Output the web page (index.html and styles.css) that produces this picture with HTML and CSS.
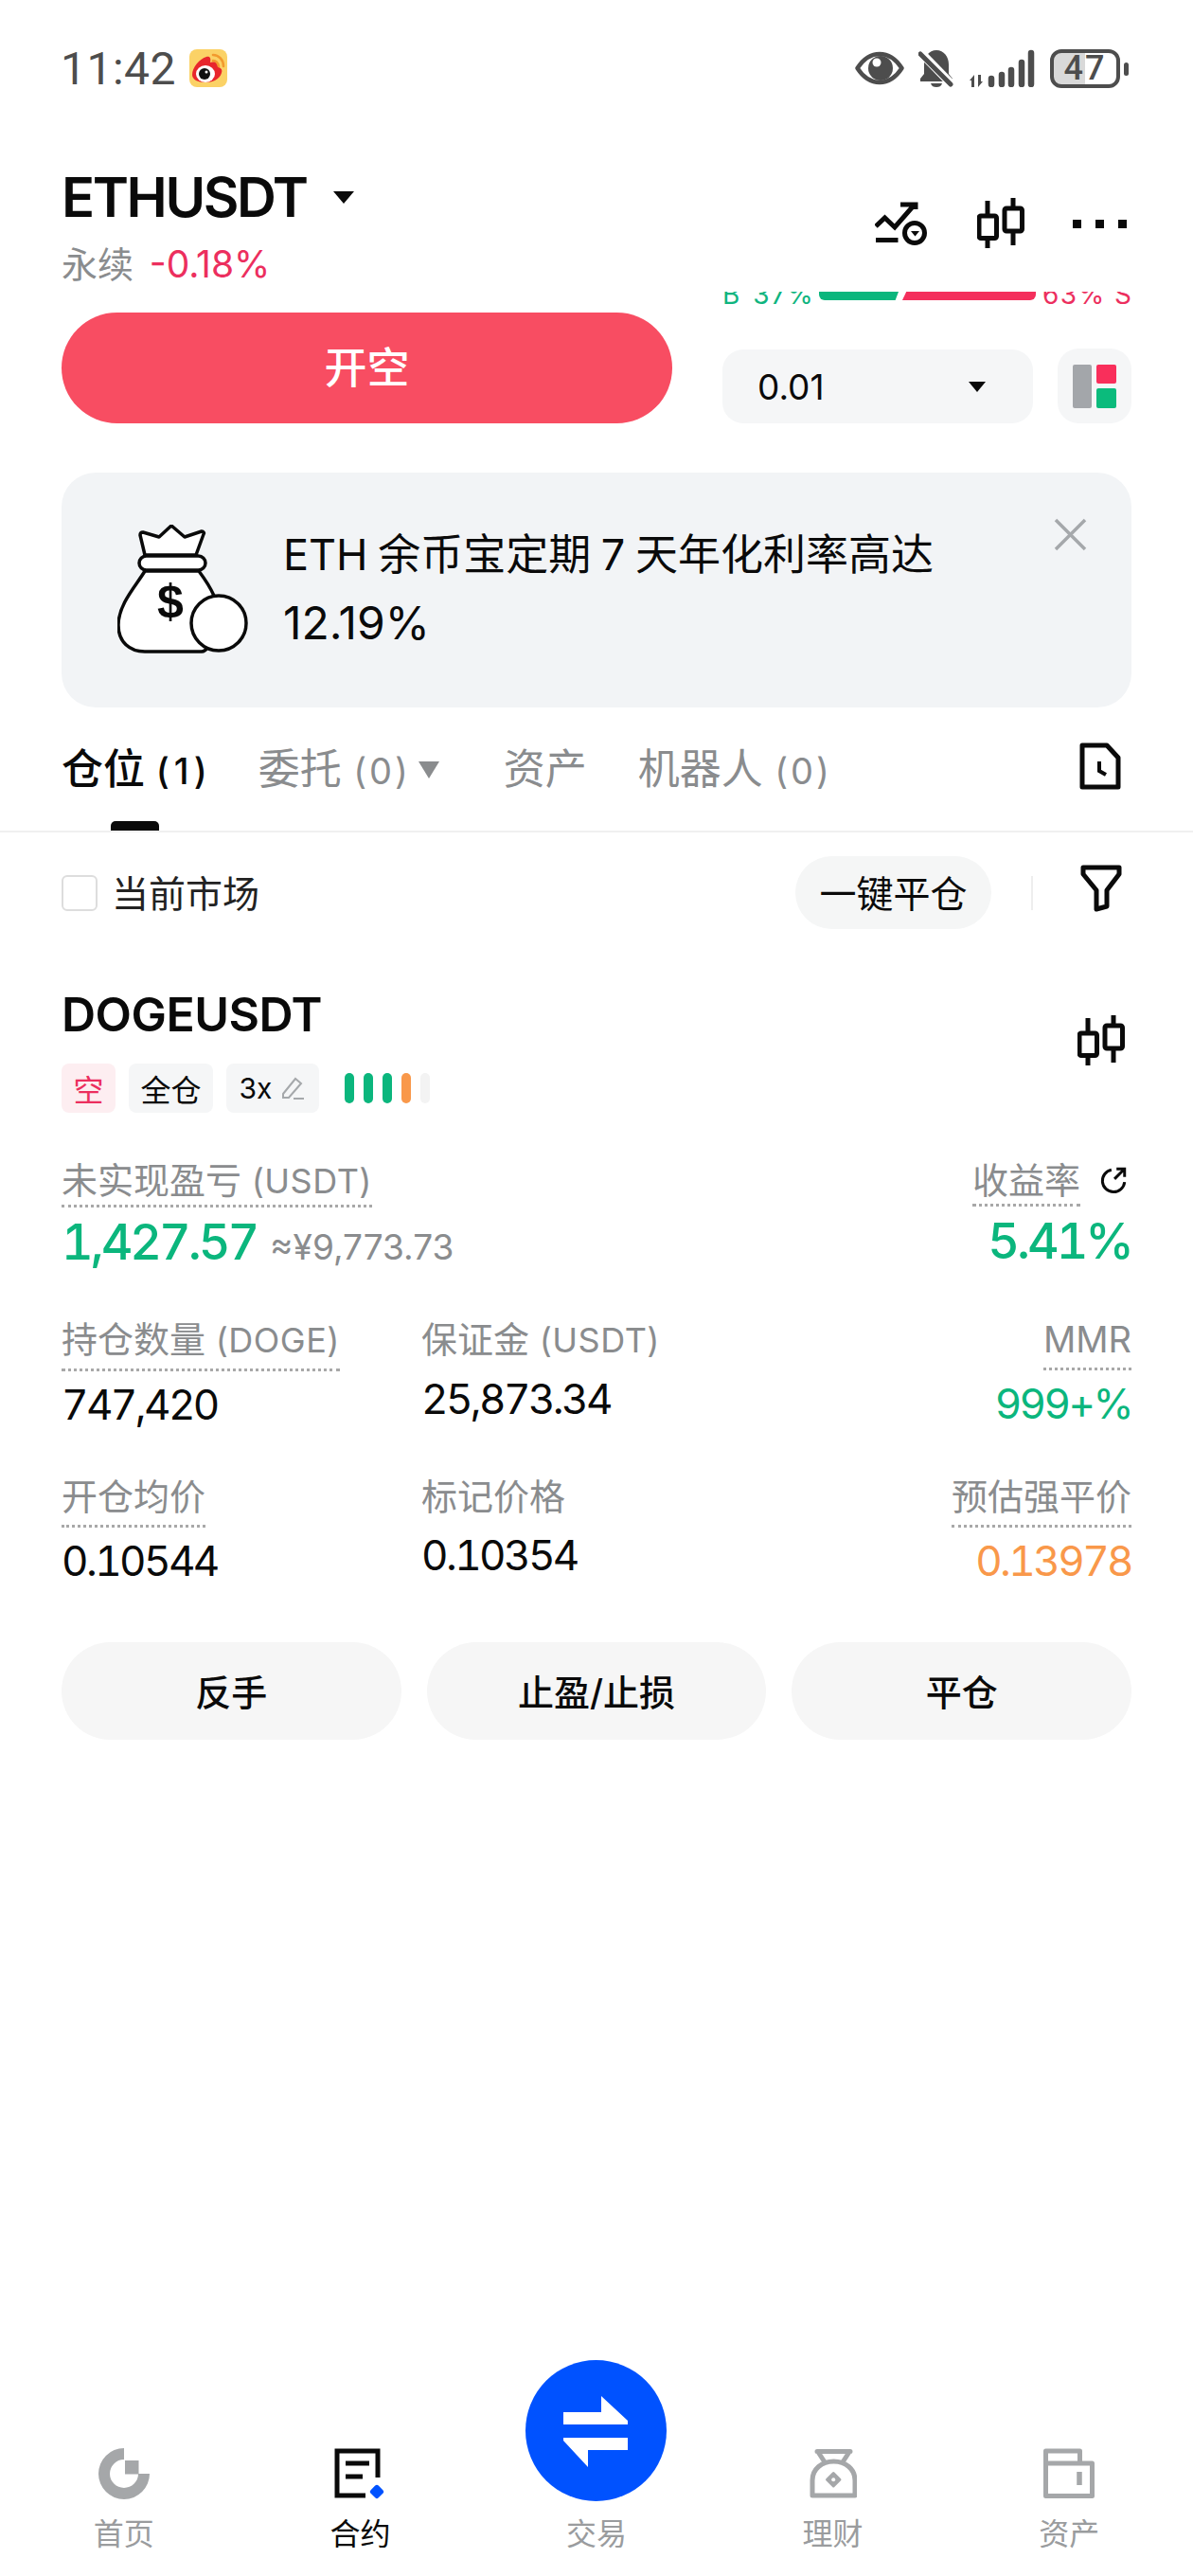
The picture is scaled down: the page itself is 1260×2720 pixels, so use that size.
FILE: index.html
```html
<!doctype html>
<html lang="zh-CN">
  <head>
    <meta charset="utf-8">
    <meta name="viewport" content="width=device-width, initial-scale=1">
    <title>ETHUSDT 永续</title>
    <link rel="stylesheet" href="styles.css">
  </head>
  <body>
    <!-- Status bar -->
    <div class="status">
      <div class="status-left">
        <span class="time">11:42</span>
        <svg class="weibo" viewBox="0 0 40 40" width="40" height="40">
          <rect width="40" height="40" rx="8" fill="#fbd266"/>
          <path d="M3 27c0-8 8-17 15-19 4-1 5 2 4 6 6-2 10 0 9 5 3 1 4 3 3 6-2 7-10 10-17 10-8 0-14-3-14-8z" fill="#e8262c"/>
          <ellipse cx="17" cy="26" rx="10" ry="9" fill="#fff"/>
          <circle cx="16" cy="26" r="6" fill="#111"/>
          <circle cx="18" cy="24" r="1.5" fill="#fff"/>
          <path d="M25 6c6 0 11 5 11 12M25 12c3 0 5 2 6 6" fill="none" stroke="#f29a2e" stroke-width="2.6" stroke-linecap="round"/>
        </svg>
      </div>
      <div class="status-right">
        <svg viewBox="0 0 52 36" width="52" height="36">
          <path d="M2.5 18C9 8 17 3 26 3s17 5 23.500 15C43 28 35 33 26 33S9 28 2.500 18z" fill="none" stroke="#4d4d4d" stroke-width="4.500" stroke-linejoin="round"/>
          <circle cx="27" cy="18" r="13" fill="#4d4d4d"/>
          <circle cx="23" cy="12" r="4.500" fill="#fff"/>
        </svg>
        <svg class="bell" viewBox="0 0 38 40" width="38" height="40">
          <path d="M19 1c8 0 13 7 13 15v10l4 5v3H2v-3l4-5V16C6 8 11 1 19 1z" fill="#4d4d4d"/>
          <path d="M13 36h12c-1 3-3 4-6 4s-5-1-6-4z" fill="#4d4d4d"/>
          <path d="M2 3l34 35" stroke="#fff" stroke-width="9"/>
          <path d="M2 5l32 32" stroke="#4d4d4d" stroke-width="5" stroke-linecap="round"/>
        </svg>
        <svg class="signal" viewBox="0 0 70 40" width="70" height="40">
          <path d="M1 33l5-6v13H3v-7zM10 27h3v7h2l-5 6z" fill="#4d4d4d"/>
          <g stroke="#4d4d4d" stroke-width="6.500" stroke-linecap="round">
            <path d="M24 31v6M35 27v10M45 22v15M56 14v23M66 4v33"/>
          </g>
        </svg>
        <div class="battery"><span>47</span></div>
      </div>
    </div>

    <!-- Symbol header -->
    <div class="top-bar">
      <div>
        <div class="title">ETHUSDT<i class="caret title-caret"></i></div>
        <div class="sub">永续 <span class="sub-change">-0.18%</span></div>
      </div>
      <div class="top-icons">
        <svg viewBox="0 0 56 46" width="56" height="46" fill="none" stroke="#0a0a0a" stroke-width="5">
          <path d="M1 26l9.500-9L21 27 41 4M27 3h16v5"/>
          <path d="M1 40.500h23.500"/>
          <circle cx="42" cy="33" r="10.500"/>
          <path d="M38 31h9l-4.500 5.500z" fill="#0a0a0a" stroke="none"/>
        </svg>
        <svg class="candle" viewBox="0 0 50 54" width="50" height="54" fill="none" stroke="#0a0a0a" stroke-width="5">
          <rect x="2" y="19" width="18.500" height="23.500" rx="2"/>
          <path d="M11 3v16M11 42.500V53"/>
          <rect x="29" y="11" width="18.500" height="24" rx="2"/>
          <path d="M38 0v11M38 35v15"/>
        </svg>
        <div class="more"><i></i><i></i><i></i></div>
      </div>
    </div>

    <div class="ratio">
      <span class="ratio-buy">B 37%</span>
      <i class="bar-buy"></i>
      <i class="bar-sell"></i>
      <span class="ratio-sell">63% S</span>
    </div>

    <!-- Order row -->
    <div class="order-row">
      <button class="btn-short">开空</button>
      <div class="qty">0.01<i class="caret qty-caret"></i></div>
      <div class="layout-btn">
        <i class="lay-gray"></i>
        <div class="lay-col"><i class="lay-red"></i><i class="lay-green"></i></div>
      </div>
    </div>

    <!-- Promo banner -->
    <div class="banner">
      <svg class="bag" viewBox="0 0 138 136" width="138" height="136">
        <g fill="#fff" stroke="#0a0a0a" stroke-width="3.500" stroke-linejoin="round">
          <path d="M29 49C20 64 1 84 1 106c0 18 12 28 28 28h60c12 0 14-40 13-59-4-9-10-18-16-26z"/>
          <path d="M29 32 24 11c0-2 1-3 3-3l17 5L57 1l14 12 18-6c2 0 3 2 2 3l-8 22z"/>
          <rect x="23" y="33" width="70" height="15" rx="7.500"/>
          <circle cx="107" cy="104" r="29"/>
        </g>
        <text class="bag-dollar" x="56" y="98" text-anchor="middle">$</text>
      </svg>
      <div class="banner-text">
        <div>ETH 余币宝定期 7 天年化利率高达</div>
        <div class="banner-rate">12.19%</div>
      </div>
      <svg class="close" viewBox="0 0 35 35" width="35" height="35" stroke="#a5a8ab" stroke-width="3.500">
        <path d="M2 2l31 31M33 2L2 33"/>
      </svg>
    </div>

    <!-- Tabs -->
    <div class="tabs">
      <div class="tab tab-active">仓位 <small>(1)</small></div>
      <div class="tab tab-caret"><span>委托 <small>(0)</small></span><i class="caret tab-arrow"></i></div>
      <div class="tab">资产</div>
      <div class="tab">机器人 <small>(0)</small></div>
      <svg class="history" viewBox="0 0 44 50" width="44" height="50" fill="none" stroke="#0a0a0a" stroke-width="5">
        <path d="M3 3h26l12 13v31H3z" stroke-linejoin="round"/>
        <path d="M21 20v10l7 4" stroke-width="4"/>
      </svg>
    </div>

    <!-- Filter row -->
    <div class="filter-row">
      <i class="checkbox"></i>
      <span class="filter-label">当前市场</span>
      <button class="close-all">一键平仓</button>
      <i class="divider"></i>
      <svg class="funnel" viewBox="0 0 44 50" width="44" height="50" fill="none" stroke="#0a0a0a" stroke-width="5" stroke-linejoin="round">
        <path d="M3 3h38v7L28 27v17l-11 3V27L3 10z"/>
      </svg>
    </div>

    <!-- Position card -->
    <div class="position">
      <div class="pos-head">
        <div>
          <div class="pos-name">DOGEUSDT</div>
          <div class="tags">
            <span class="tag tag-short">空</span>
            <span class="tag tag-cross">全仓</span>
            <span class="tag tag-lev">3x
              <svg viewBox="0 0 28 28" width="28" height="28" fill="none" stroke="#a5a8ab" stroke-width="2">
                <path d="M4 20 17 4l6 5-13 15H4zM15 25h11"/>
              </svg>
            </span>
            <div class="risk"><i></i><i></i><i></i><i class="risk-warn"></i><i class="risk-off"></i></div>
          </div>
        </div>
        <svg class="candle pos-candle" viewBox="0 0 50 54" width="50" height="54" fill="none" stroke="#0a0a0a" stroke-width="5">
          <rect x="2" y="19" width="18.500" height="23.500" rx="2"/>
          <path d="M11 3v16M11 42.500V53"/>
          <rect x="29" y="11" width="18.500" height="24" rx="2"/>
          <path d="M38 0v11M38 35v15"/>
        </svg>
      </div>

      <div class="data-row data-row-first">
        <div class="cell">
          <div class="label dotted">未实现盈亏 <small>(USDT)</small></div>
          <div class="value big green">1,427.57<span class="approx">≈¥9,773.73</span></div>
        </div>
        <div class="cell"></div>
        <div class="cell cell-right">
          <div class="label-wrap">
            <div class="label dotted">收益率</div>
            <svg class="share" viewBox="0 0 30 30" width="32" height="32" fill="none" stroke="#0a0a0a" stroke-width="2.800">
              <path d="M13 4A11 11 0 1 0 26 16M16 13l9-9M18 3h8v8"/>
            </svg>
          </div>
          <div class="value big green">5.41%</div>
        </div>
      </div>

      <div class="data-row data-row-mid">
        <div class="cell">
          <div class="label dotted">持仓数量 <small>(DOGE)</small></div>
          <div class="value">747,420</div>
        </div>
        <div class="cell">
          <div class="label">保证金 <small>(USDT)</small></div>
          <div class="value">25,873.34</div>
        </div>
        <div class="cell cell-right">
          <div class="label dotted">MMR</div>
          <div class="value green">999+%</div>
        </div>
      </div>

      <div class="data-row data-row-last">
        <div class="cell">
          <div class="label dotted">开仓均价</div>
          <div class="value">0.10544</div>
        </div>
        <div class="cell">
          <div class="label">标记价格</div>
          <div class="value">0.10354</div>
        </div>
        <div class="cell cell-right">
          <div class="label dotted">预估强平价</div>
          <div class="value orange">0.13978</div>
        </div>
      </div>

      <div class="pos-actions">
        <button>反手</button>
        <button>止盈/止损</button>
        <button>平仓</button>
      </div>
    </div>

    <!-- Bottom navigation -->
    <div class="nav">
      <div class="nav-item">
        <svg class="nav-icon" viewBox="0 0 54 54" width="54" height="54" fill="#a5a7a9">
          <path d="M27 0A27 27 0 1 0 54 27H42A15 15 0 1 1 27 12z"/>
          <rect x="28" y="13" width="14.500" height="14.500"/>
        </svg>
        <span>首页</span>
      </div>
      <div class="nav-item nav-active">
        <svg class="nav-icon" viewBox="0 0 54 54" width="54" height="54" fill="none" stroke="#0a0a0a" stroke-width="5">
          <path d="M46 31V3H3v47h30"/>
          <path d="M12 16h25M12 30h18"/>
          <rect x="39.200" y="40.200" width="11.500" height="11.500" rx="2.500" fill="#0052ff" stroke="none" transform="rotate(45 45 46)"/>
        </svg>
        <span>合约</span>
      </div>
      <div class="nav-item">
        <div class="swap">
          <svg viewBox="0 0 149 149" width="149" height="149" fill="#fff">
            <path d="M40 55h40V38l28 26v4H40z"/>
            <path d="M108 82H40v3l26 28V95h42z"/>
          </svg>
        </div>
        <span>交易</span>
      </div>
      <div class="nav-item">
        <svg class="nav-icon" viewBox="0 0 50 54" width="50" height="54" fill="none" stroke="#a5a7a9" stroke-width="5" stroke-linejoin="round">
          <path d="M8 3.500h35M9 4l6.500 10M42 4l-6.500 10" stroke-linecap="round"/>
          <path d="M3 50h45V34C48 22 38 14 25.500 14S3 22 3 34z"/>
          <rect x="19" y="27" width="12.500" height="12.500" rx="1.500" fill="#a5a7a9" stroke="none" transform="rotate(45 25.250 33.250)"/>
          <circle cx="25.200" cy="33.200" r="2" fill="#fff" stroke="none"/>
        </svg>
        <span>理财</span>
      </div>
      <div class="nav-item">
        <svg class="nav-icon" viewBox="0 0 54 54" width="54" height="54" fill="none" stroke="#a5a7a9" stroke-width="5" stroke-linejoin="round">
          <path d="M2.500 16h49v34.500h-49V3h36v13"/>
          <path d="M38 25v14" stroke-width="5.500"/>
        </svg>
        <span>资产</span>
      </div>
    </div>
  </body>
</html>
```

FILE: styles.css
```css
/* Reset */
* {
  margin: 0;
  padding: 0;
  box-sizing: border-box;
}

i {
  display: block;
}

button {
  border: none;
  font: inherit;
  color: inherit;
}

body {
  width: 1260px;
  height: 2720px;
  overflow: hidden;
  display: flex;
  flex-direction: column;
  background-color: #fff;
  color: #0a0a0a;
  font-family: Inter, "Noto Sans CJK SC", sans-serif;
}

small {
  font-size: 0.86em;
}

svg {
  display: block;
  flex: none;
}

.caret {
  width: 0;
  height: 0;
  border-left: 11px solid transparent;
  border-right: 11px solid transparent;
  border-top: 13px solid #0a0a0a;
}

/* Status bar */
.status {
  display: flex;
  justify-content: space-between;
  align-items: center;
  height: 44px;
  margin-top: 50px;
  padding: 0 68px 0 64px;
}

.status-left,
.status-right {
  display: flex;
  align-items: center;
}

.time {
  font-family: Roboto, sans-serif;
  font-size: 48px;
  letter-spacing: 0.5px;
  color: #4d4d4d;
}

.weibo {
  margin-left: 14px;
}

.bell {
  margin-left: 15px;
}

.signal {
  margin-left: 15px;
}

.battery {
  position: relative;
  width: 74px;
  height: 41px;
  margin: 0 9px 0 16px;
  border: 4px solid #4d4d4d;
  border-radius: 12px;
  background: linear-gradient(90deg, #d9d9d9 50%, #fff 50%);
  color: #4d4d4d;
  font-family: Roboto, sans-serif;
  font-size: 36px;
  font-weight: 500;
  line-height: 33px;
  letter-spacing: 2px;
  text-align: center;
}

.battery::after {
  content: "";
  position: absolute;
  top: 10px;
  right: -13px;
  width: 5px;
  height: 14px;
  border-radius: 3px;
  background-color: #4d4d4d;
}

/* Symbol header */
.top-bar {
  display: flex;
  justify-content: space-between;
  height: 131px;
  margin-top: 75px;
  padding: 0 65px;
}

.title {
  display: flex;
  align-items: center;
  height: 78px;
  font-size: 58px;
  font-weight: 600;
  letter-spacing: -2.4px;
}

.title-caret {
  margin-left: 28px;
}

.sub {
  font-size: 38px;
  line-height: 44px;
  margin-top: 10px;
  color: #8a8c8e;
}

.sub-change {
  margin-left: 6px;
  font-size: 39px;
  color: #ec2f5e;
}

.top-icons {
  display: flex;
  align-items: center;
  height: 96px;
  margin: 19px 5px 0 0;
}

.top-icons .candle {
  margin-left: 52px;
}

.more {
  display: flex;
  gap: 15px;
  margin-left: 51px;
}

.more i {
  width: 9px;
  height: 9px;
  background-color: #0a0a0a;
}

/* Long / short ratio */
.ratio {
  display: flex;
  height: 13px;
  margin-top: 8px;
  padding-left: 763px;
  overflow: hidden;
  font-size: 28px;
  line-height: 19px;
  letter-spacing: 1.5px;
}

.ratio span {
  height: 13px;
  margin-top: -6px;
  white-space: nowrap;
}

.ratio-buy {
  width: 102px;
  word-spacing: 3px;
  color: #0fb57f;
}

.ratio-sell {
  margin-left: 7px;
  color: #ec2f5e;
}

.bar-buy {
  width: 84px;
  height: 9px;
  border-bottom-left-radius: 6px;
  background-color: #0bb67d;
  clip-path: polygon(0 0, 100% 0, 96% 100%, 0 100%);
}

.bar-sell {
  width: 141px;
  height: 9px;
  margin-left: 4px;
  border-bottom-right-radius: 6px;
  background-color: #f42f5c;
  clip-path: polygon(3% 0, 100% 0, 100% 100%, 0 100%);
}

/* Order row */
.order-row {
  display: flex;
  align-items: flex-end;
  margin-top: 9px;
  padding: 0 65px;
}

.btn-short {
  width: 645px;
  height: 117px;
  padding-bottom: 6px;
  border-radius: 59px;
  background-color: #f84d62;
  color: #fff;
  font-size: 45px;
  font-weight: 500;
}

.qty {
  display: flex;
  align-items: center;
  justify-content: space-between;
  width: 328px;
  height: 78px;
  margin-left: 53px;
  padding: 0 50px 0 37px;
  border-radius: 22px;
  background-color: #f5f6f7;
  font-size: 37px;
}

.qty-caret {
  border-left-width: 9px;
  border-right-width: 9px;
  border-top-width: 11px;
}

.layout-btn {
  display: flex;
  gap: 5px;
  justify-content: center;
  align-items: center;
  width: 78px;
  height: 79px;
  margin-left: 26px;
  border-radius: 22px;
  background-color: #f5f6f7;
}

.lay-gray {
  width: 20px;
  height: 46px;
  border-radius: 2px;
  background-color: #a3a6aa;
}

.lay-col {
  display: flex;
  flex-direction: column;
  gap: 5px;
}

.lay-red,
.lay-green {
  width: 21px;
  height: 20.500px;
  border-radius: 2px;
  background-color: #f92f5b;
}

.lay-green {
  background-color: #0bbb7c;
}

/* Promo banner */
.banner {
  display: flex;
  height: 248px;
  margin: 52px 65px 0;
  padding: 48px 47px 0 59px;
  border-radius: 36px;
  background-color: #f2f4f6;
}

.bag {
  margin-top: 7px;
}

.bag-dollar {
  font-family: "Liberation Sans", sans-serif;
  font-size: 50px;
  font-weight: 700;
  fill: #0a0a0a;
}

.banner-text {
  margin: 3px 0 0 37px;
  font-size: 45px;
  line-height: 72px;
  word-spacing: -2px;
}

.banner-rate {
  font-size: 48px;
}

.close {
  margin-left: auto;
}

/* Tabs */
.tabs {
  display: flex;
  gap: 54px;
  align-items: flex-start;
  height: 132px;
  padding: 0 65px;
  border-bottom: 2px solid #f0f0f0;
}

.tab {
  position: relative;
  height: 130px;
  padding-top: 38px;
  font-size: 44px;
  line-height: 54px;
  color: #8a8c8e;
  white-space: nowrap;
}

.tab small {
  font-size: 38px;
  letter-spacing: 3px;
}

.tab-active {
  margin-right: -5px;
  color: #0a0a0a;
  font-weight: 500;
}

.tab-active small {
  letter-spacing: 5px;
}

.tab-active::after {
  content: "";
  position: absolute;
  left: 52px;
  bottom: 0;
  width: 51px;
  height: 10px;
  border-radius: 5px 5px 0 0;
  background-color: #0a0a0a;
}

.tab-caret {
  display: flex;
  margin-right: 14px;
}

.tab-arrow {
  margin: 19px 0 0 8px;
  border-top-color: #8a8c8e;
  border-top-width: 18px;
}

.history {
  margin: 37px 11px 0 auto;
}

/* Filter row */
.filter-row {
  display: flex;
  align-items: center;
  height: 77px;
  margin-top: 25px;
  padding: 0 75px 0 65px;
}

.checkbox {
  width: 38px;
  height: 38px;
  border: 2.500px solid #dddddd;
  border-radius: 6px;
}

.filter-label {
  margin: -4px 0 0 15px;
  font-size: 39px;
  color: #222;
}

.close-all {
  width: 207px;
  height: 77px;
  margin-left: auto;
  padding-bottom: 4px;
  border-radius: 39px;
  background-color: #f5f6f6;
  font-size: 39px;
}

.divider {
  width: 2px;
  height: 36px;
  margin-left: 42px;
  background-color: #eee;
}

.funnel {
  margin: -10px 0 0 50px;
}

/* Position card */
.position {
  padding: 0 65px;
}

.pos-head {
  display: flex;
  justify-content: space-between;
  align-items: center;
  margin-top: 60px;
}

.pos-name {
  font-size: 50px;
  font-weight: 600;
  line-height: 60px;
  letter-spacing: -0.5px;
}

.pos-candle {
  margin: 0 7px 18px 0;
}

.tags {
  display: flex;
  gap: 14px;
  align-items: center;
  margin-top: 22px;
}

.tag {
  display: flex;
  align-items: center;
  justify-content: center;
  width: 57px;
  height: 52px;
  border-radius: 8px;
  background-color: #f5f6f7;
  font-size: 32px;
}

.tag-short {
  background-color: #fdeef1;
  color: #ec2f5e;
}

.tag-cross {
  width: 89px;
}

.tag-lev {
  gap: 8px;
  width: 98px;
  font-size: 30px;
}

.risk {
  display: flex;
  gap: 10px;
  margin-left: 13px;
}

.risk i {
  width: 10px;
  height: 32px;
  border-radius: 5px;
  background-color: #0bb67d;
}

.risk .risk-warn {
  background-color: #f9984a;
}

.risk .risk-off {
  background-color: #f3f3f3;
}

/* Data rows */
.data-row {
  display: grid;
  grid-template-columns: 380px 1fr 1fr;
}

.data-row-first {
  margin-top: 49px;
}

.data-row-mid {
  margin-top: 45px;
}

.data-row-last {
  margin-top: 50px;
}

.cell-right {
  display: flex;
  flex-direction: column;
  align-items: flex-end;
}

.label {
  width: fit-content;
  font-size: 38px;
  line-height: 44px;
  color: #8a8c8e;
  white-space: nowrap;
}

.label small {
  font-size: 36px;
  letter-spacing: 0.5px;
}

.dotted {
  padding-bottom: 8px;
  border-bottom: 3px dotted #a8a8a8;
}

.data-row-first .dotted {
  padding-bottom: 3px;
}

.label-wrap {
  display: flex;
  gap: 19px;
  align-items: flex-start;
}

.share {
  margin: 7px 3px 0 0;
}

/* Figures in the reference use equal digit widths */
.value {
  margin-top: 15px;
  font-size: 44px;
  line-height: 50px;
  letter-spacing: -2.6px;
  font-variant-numeric: tabular-nums;
  white-space: nowrap;
}

.dotted + .value {
  margin-top: 10px;
}

.big {
  margin-top: 7px;
  font-size: 52px;
  font-weight: 500;
  line-height: 60px;
  letter-spacing: -3px;
}

.label-wrap + .value,
.data-row-first .dotted + .value {
  margin-top: 7px;
}

.approx {
  margin-left: 14px;
  font-size: 37px;
  font-weight: 400;
  letter-spacing: 0;
  font-variant-numeric: normal;
  color: #8a8c8e;
}

.green {
  color: #0bb67d;
}

.orange {
  color: #f9984a;
}

.pos-actions {
  display: flex;
  gap: 27px;
  margin-top: 61px;
}

.pos-actions button {
  flex: 1;
  height: 103px;
  padding-bottom: 3px;
  border-radius: 52px;
  background-color: #f6f6f6;
  font-size: 38px;
  font-weight: 500;
}

/* Bottom navigation */
.nav {
  display: grid;
  grid-template-columns: repeat(5, 1fr);
  margin-top: auto;
  padding: 0 6px 27px;
}

.nav-item {
  display: flex;
  flex-direction: column;
  justify-content: flex-end;
  align-items: center;
  font-size: 32px;
  line-height: 34px;
  color: #9a9c9e;
}

.nav-active {
  color: #0a0a0a;
}

.nav-icon {
  margin-bottom: 20px;
}

.swap {
  width: 149px;
  height: 149px;
  margin-bottom: 18px;
  border-radius: 50%;
  background-color: #0052ff;
}
```
